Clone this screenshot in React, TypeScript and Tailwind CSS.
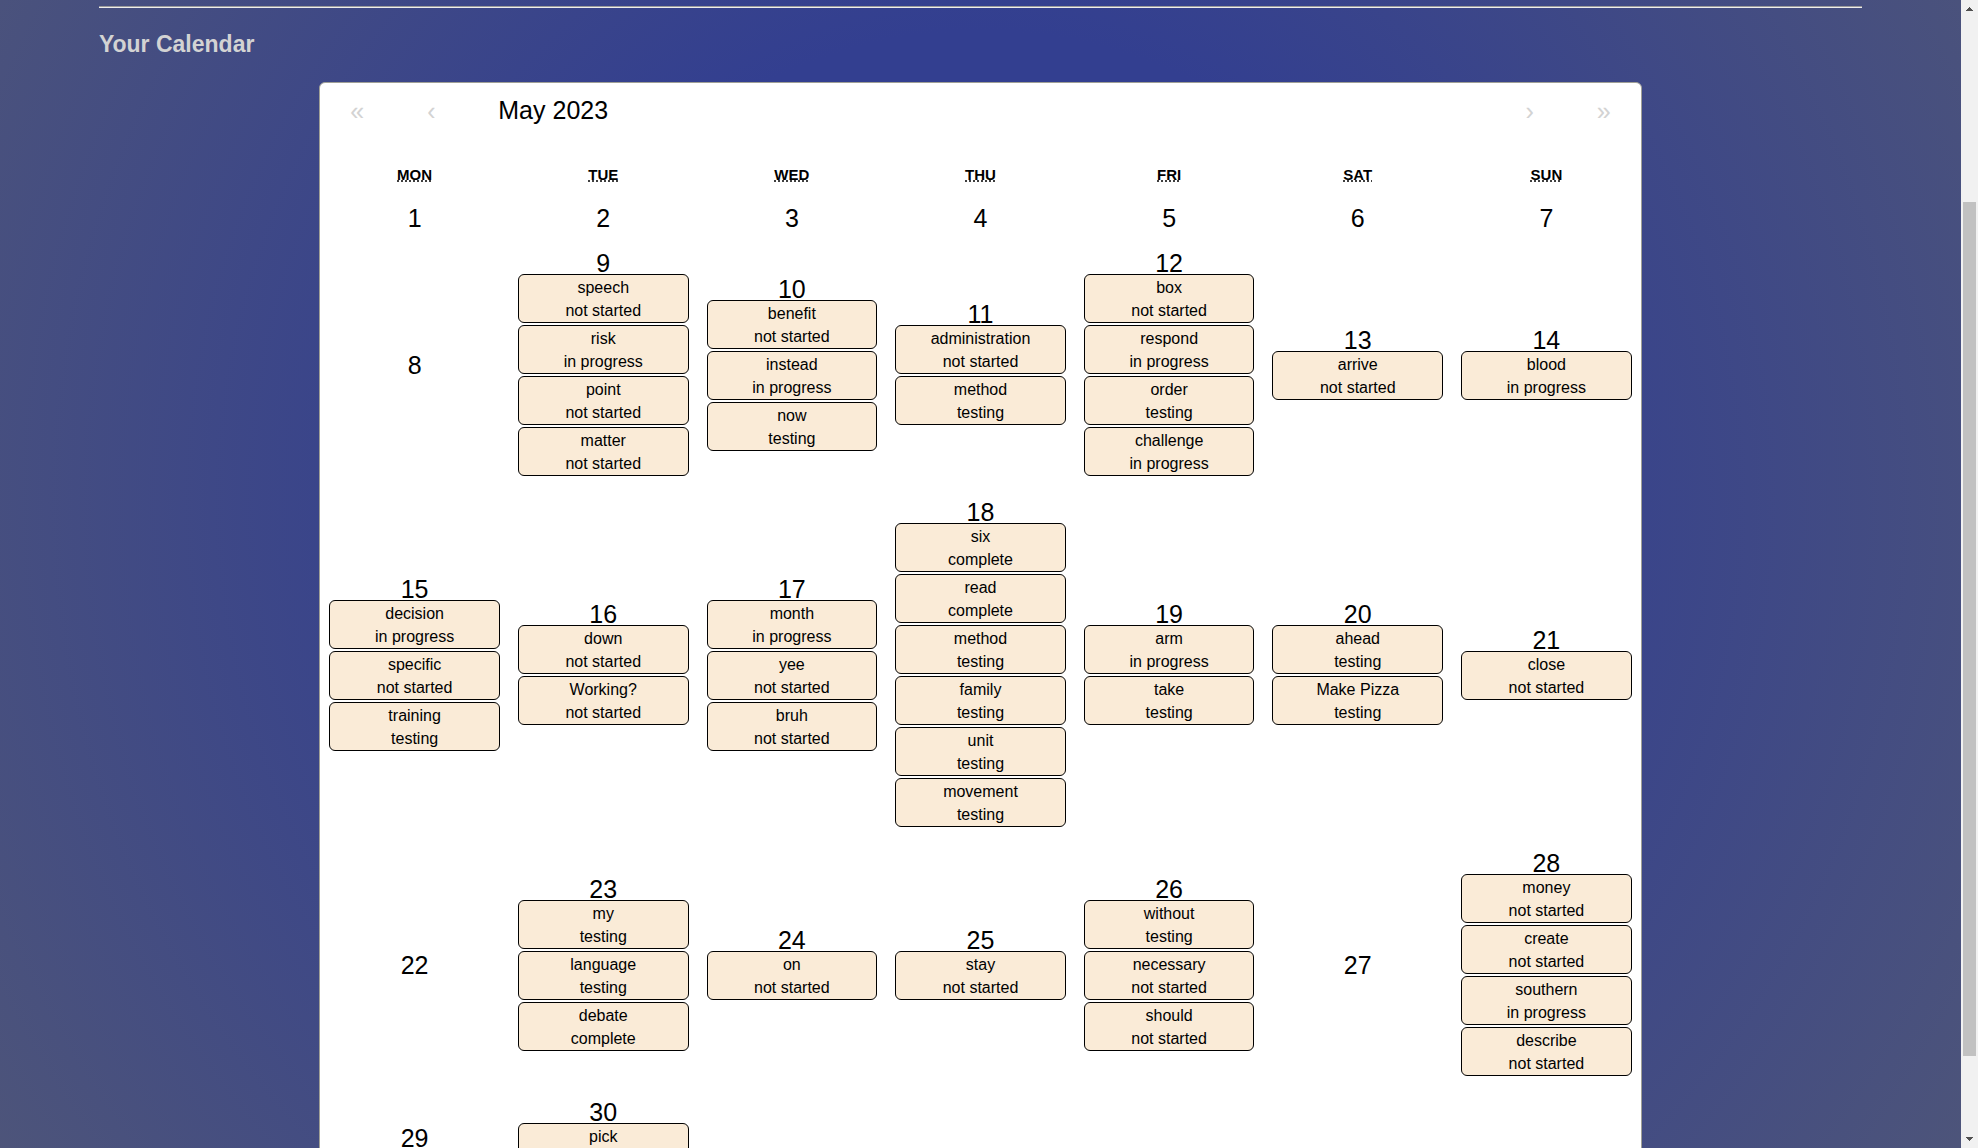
type Task = [name: string, status: string];
type Day = { day: number; tasks: Task[] };

const N = "not started";
const P = "in progress";
const T = "testing";
const C = "complete";

const weekdays: [string, string][] = [
  ["MON", "Monday"],
  ["TUE", "Tuesday"],
  ["WED", "Wednesday"],
  ["THU", "Thursday"],
  ["FRI", "Friday"],
  ["SAT", "Saturday"],
  ["SUN", "Sunday"],
];

const tasks: Record<number, Task[]> = {
  9: [["speech", N], ["risk", P], ["point", N], ["matter", N]],
  10: [["benefit", N], ["instead", P], ["now", T]],
  11: [["administration", N], ["method", T]],
  12: [["box", N], ["respond", P], ["order", T], ["challenge", P]],
  13: [["arrive", N]],
  14: [["blood", P]],
  15: [["decision", P], ["specific", N], ["training", T]],
  16: [["down", N], ["Working?", N]],
  17: [["month", P], ["yee", N], ["bruh", N]],
  18: [["six", C], ["read", C], ["method", T], ["family", T], ["unit", T], ["movement", T]],
  19: [["arm", P], ["take", T]],
  20: [["ahead", T], ["Make Pizza", T]],
  21: [["close", N]],
  23: [["my", T], ["language", T], ["debate", C]],
  24: [["on", N]],
  25: [["stay", N]],
  26: [["without", T], ["necessary", N], ["should", N]],
  28: [["money", N], ["create", N], ["southern", P], ["describe", N]],
  30: [["pick", N]],
};

const days: Day[] = Array.from({ length: 30 }, (_, i) => ({
  day: i + 1,
  tasks: tasks[i + 1] ?? [],
}));

function NavButton({ label, children }: { label: string; children: string }) {
  return (
    <button type="button" aria-label={label} className="w-[74px] pt-0.5 text-center text-[25px] text-[#d3d3d3]">
      {children}
    </button>
  );
}

function TaskCard({ task }: { task: Task }) {
  return (
    <div className="mb-0.5 w-full rounded-md border border-black bg-[#faebd7] pt-px text-base leading-[23px]">
      <p>{task[0]}</p>
      <p>{task[1]}</p>
    </div>
  );
}

function DayTile({ item }: { item: Day }) {
  return (
    <button type="button" className="flex flex-col items-center justify-center px-[9px] pt-2.5 pb-[13px]">
      <span className="text-[25px] leading-[22px]">{item.day}</span>
      {item.tasks.map((task) => (
        <TaskCard key={task[0]} task={task} />
      ))}
    </button>
  );
}

function ScrollBar() {
  return (
    <div aria-hidden="true" className="flex w-[17px] shrink-0 flex-col items-center bg-[#f1f1f1]">
      <svg className="h-[17px] w-[17px]" viewBox="0 0 17 17" shapeRendering="crispEdges">
        <path d="M5 11h7v-1h-1V9h-1V8H9V7H8v1H7v1H6v1H5z" fill="#505050" />
      </svg>
      <div className="flex w-full grow flex-col items-center">
        <div className="grow-[185]" />
        <div className="w-[13px] grow-[854] bg-[#c1c1c1]" />
        <div className="grow-[75]" />
      </div>
      <svg className="h-[17px] w-[17px]" viewBox="0 0 17 17" shapeRendering="crispEdges">
        <path d="M5 6h7v1h-1v1h-1v1H9v1H8V9H7V8H6V7H5z" fill="#505050" />
      </svg>
    </div>
  );
}

export default function App() {
  return (
    <div className="flex h-screen overflow-hidden font-['Liberation_Sans',Arial,sans-serif] text-black">
      <main className="min-w-0 grow overflow-hidden bg-[radial-gradient(circle_1233px_at_50%_500px,#333f90_38%,#4f5678_100%)] px-[5%]">
        <hr className="mt-1.5 border-t border-b border-t-[#9a9a9a] border-b-[#eeeeee]" />
        <h2 className="mt-[22px] text-[23px] leading-7 font-bold text-[#d3d3d3]">Your Calendar</h2>
        <section
          aria-label="Calendar"
          className="mx-auto mt-6 w-3/4 rounded-md border border-[#a0a096] bg-white pb-4"
        >
          <div className="flex h-[56px] items-center">
            <NavButton label="Previous year">«</NavButton>
            <NavButton label="Previous month">‹</NavButton>
            <button type="button" className="grow pl-[30px] text-left text-[25px]">
              May 2023
            </button>
            <NavButton label="Next month">›</NavButton>
            <NavButton label="Next year">»</NavButton>
          </div>
          <div className="mt-5 grid grid-cols-7 pb-1.5 text-center text-[15px] leading-8 font-bold">
            {weekdays.map(([short, full]) => (
              <abbr key={short} title={full}>
                {short}
              </abbr>
            ))}
          </div>
          <div className="grid grid-cols-7 text-center">
            {days.map((item) => (
              <DayTile key={item.day} item={item} />
            ))}
          </div>
        </section>
      </main>
      <ScrollBar />
    </div>
  );
}
